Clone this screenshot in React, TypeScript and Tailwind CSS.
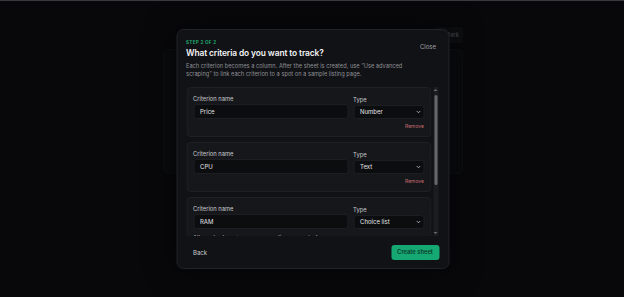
import { ChevronDown } from "lucide-react";

type Criterion = {
  name: string;
  type: string;
  allowed?: boolean;
};

const criteria: Criterion[] = [
  { name: "Price", type: "Number" },
  { name: "CPU", type: "Text" },
  { name: "RAM", type: "Choice list", allowed: true },
];

const CriterionCard = ({ item }: { item: Criterion }) => {
  return (
    <div className="rounded-[4px] border border-[#1f2024] bg-[#16171a] px-[6px] pt-[7px] pb-[7px]">
      <div className="flex gap-[5px]">
        <div className="flex w-[155px] flex-col">
          <label className="h-[8px] text-[5.8px] leading-[8px] text-[#c9cacf]">
            Criterion name
          </label>
          <div className="mt-[1px] flex h-[15px] items-center rounded-[3px] border border-[#1d1e22] bg-[#0c0d0f] pl-[6px] text-[6px] text-[#e4e4e7]">
            {item.name}
          </div>
        </div>
        <div className="flex w-[71px] flex-col">
          <label className="mt-[1px] h-[8px] text-[5.8px] leading-[8px] text-[#c9cacf]">
            Type
          </label>
          <div className="mt-[1px] flex h-[14px] items-center justify-between rounded-[3px] border border-[#1d1e22] bg-[#0c0d0f] pr-[2px] pl-[6px] text-[6px] text-[#e4e4e7]">
            <span>{item.type}</span>
            <ChevronDown size={6} strokeWidth={3} className="text-[#d4d4d8]" />
          </div>
        </div>
      </div>
      {item.allowed ? (
        <div className="mt-[5px]">
          <div className="text-[5.8px] leading-[8px] text-[#c9cacf]">
            Allowed values (comma or newline separated)
          </div>
          <div className="mt-[2px] h-[34px] rounded-[3px] border border-[#1d1e22] bg-[#0c0d0f]" />
        </div>
      ) : (
        <div className="mt-[4px] flex justify-end">
          <button className="text-[5px] leading-[6px] text-[#c46a72]">Remove</button>
        </div>
      )}
    </div>
  );
};

// drawn scrollbar (headless browser hides native ones)
const ScrollBar = () => {
  return (
    <div className="flex h-[149px] w-[5px] flex-col items-center bg-[#1b1c20]">
      <div className="mt-[2px] h-0 w-0 border-x-[2px] border-b-[2px] border-x-transparent border-b-[#6a6b71]" />
      <div className="mt-[4px] h-[90px] w-[3px] rounded-[1.5px] bg-[#66676c]" />
      <div className="mt-auto mb-[2px] h-0 w-0 border-x-[2px] border-t-[2px] border-x-transparent border-t-[#6a6b71]" />
    </div>
  );
};

export default function App() {
  return (
    <div
      className="relative h-[297px] w-[624px] overflow-hidden border-t border-[#3a3b3f] bg-[#0a0b0e]"
      style={{ fontFamily: "Inter, 'Liberation Sans', sans-serif" }}
    >
      {/* page behind the dialog */}
      <div className="ml-[163px] w-[300px] pt-[26px]">
        <div className="flex justify-end">
          <div className="flex h-[16px] w-[27px] items-center justify-end rounded-[3px] bg-[#111215] pr-[4px] text-[5.8px] text-[#5f6167]">
            Dark
          </div>
        </div>
        <div className="mt-[6px] h-[125px] rounded-[5px] border border-[#121317] bg-[#0d0e11]" />
      </div>

      {/* dialog */}
      <div className="absolute inset-0 flex items-start justify-center bg-[#000000]/20">
        <div className="mt-[28px] flex h-[240px] w-[273px] translate-x-[0.5px] flex-col rounded-[7px] border border-[#222327] bg-[#111215] pt-[10px] pr-[10px] pb-[8px] pl-[9px] shadow-[0_0_30px_rgba(0,0,0,0.6)]">
          <div className="flex justify-between">
            <div className="flex flex-col">
              <div className="text-[4.6px] leading-[6px] font-bold tracking-[0.3px] text-[#1faa6f]">
                STEP 2 OF 2
              </div>
              <h2 className="mt-[2px] text-[8.4px] leading-[11px] font-semibold tracking-[-0.1px] text-[#f4f4f5]">
                What criteria do you want to track?
              </h2>
              <p className="mt-[3px] w-[225px] text-[5.7px] leading-[8.3px] text-[#8e9096]">
                Each criterion becomes a column. After the sheet is created, use “Use advanced
                scraping” to link each criterion to a spot on a sample listing page.
              </p>
            </div>
            <button className="mt-[3px] mr-[2px] h-[8px] text-[6px] leading-[8px] text-[#a1a2a8]">
              Close
            </button>
          </div>

          <div className="mt-[8px] flex gap-[2px]">
            <div className="flex h-[149px] w-[245px] flex-col gap-[5px] overflow-hidden">
              {criteria.map((c) => (
                <div key={c.name} className="shrink-0">
                  <CriterionCard item={c} />
                </div>
              ))}
            </div>
            <ScrollBar />
          </div>

          <div className="mt-auto flex items-center justify-between">
            <button className="pl-[7px] text-[6px] leading-[8px] text-[#c9cacf]">Back</button>
            <button className="-mr-[1px] flex h-[15px] w-[48px] items-center justify-center rounded-[3px] bg-[#15a873] text-[5.8px] font-semibold text-[#0b3d29]">
              Create sheet
            </button>
          </div>
        </div>
      </div>
    </div>
  );
}
